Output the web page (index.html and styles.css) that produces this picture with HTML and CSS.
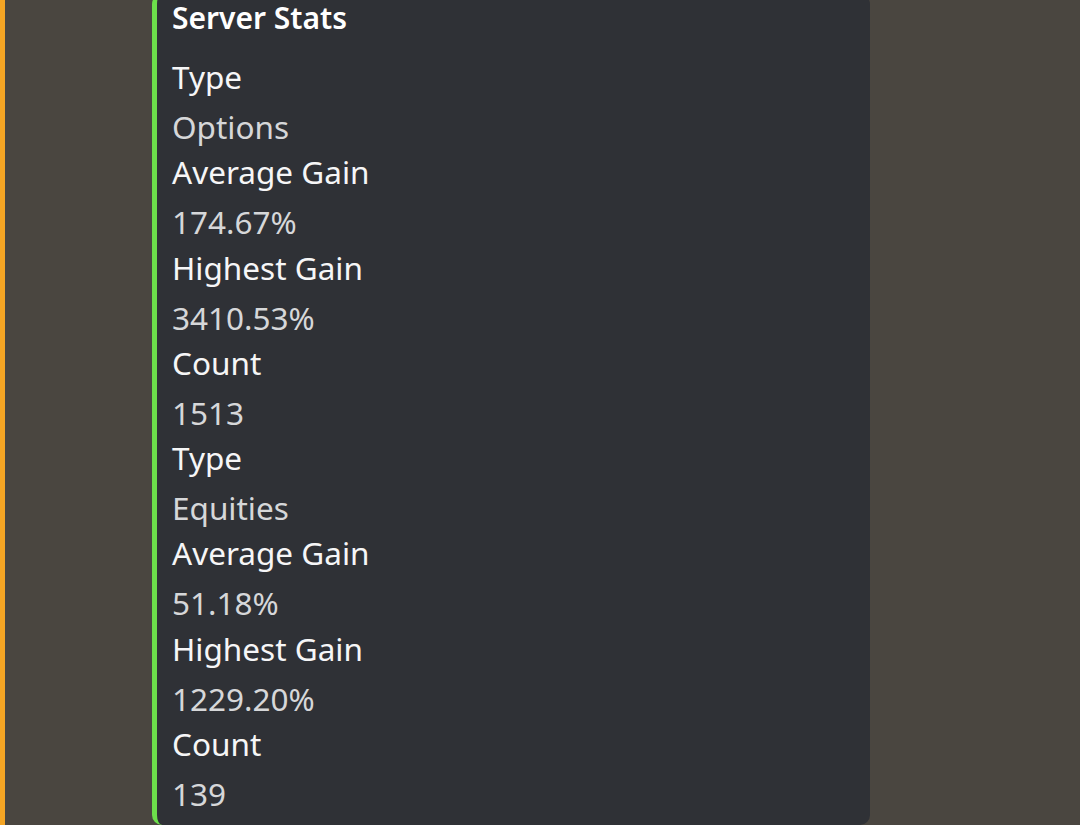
FILE: index.html
```html
<!DOCTYPE html>
<html>
<head>
<meta charset="utf-8">
<link rel="stylesheet" href="styles.css">
</head>
<body>
<div class="page">
  <div class="embed">
    <div class="embed-title">Server Stats</div>
    <div class="fields">
      <div class="field"><div class="field-name">Type</div><div class="field-value">Options</div></div>
      <div class="field"><div class="field-name">Average Gain</div><div class="field-value">174.67%</div></div>
      <div class="field"><div class="field-name">Highest Gain</div><div class="field-value">3410.53%</div></div>
      <div class="field"><div class="field-name">Count</div><div class="field-value">1513</div></div>
      <div class="field"><div class="field-name">Type</div><div class="field-value">Equities</div></div>
      <div class="field"><div class="field-name">Average Gain</div><div class="field-value">51.18%</div></div>
      <div class="field"><div class="field-name">Highest Gain</div><div class="field-value">1229.20%</div></div>
      <div class="field"><div class="field-name">Count</div><div class="field-value">139</div></div>
    </div>
  </div>
</div>
</body>
</html>
```
FILE: styles.css
```css
html, body {
  margin: 0;
  padding: 0;
  height: 100%;
  overflow: hidden;
}
body {
  background: #4a4640;
  font-family: "Noto Sans", "Open Sans", sans-serif;
}
.page {
  min-height: 100%;
  border-left: 5px solid #f5a524;
  box-sizing: border-box;
  padding-left: 147px;
}
.embed {
  box-sizing: border-box;
  width: 718px;
  margin-top: -6px;
  padding: 8px 16px 11px 15px;
  background: #2f3136;
  border-left: 5px solid #6cdf4b;
  border-radius: 10px;
}
.embed-title {
  color: #ffffff;
  font-weight: 600;
  font-size: 30px;
  line-height: 32px;
}
.fields {
  display: flex;
  flex-direction: column;
  gap: 5.3px;
  margin-top: 23px;
}
.field-name {
  color: #f6f6f7;
  font-weight: 400;
  font-size: 31.5px;
  line-height: 40px;
}
.field-value {
  color: #d6d7d9;
  font-weight: 400;
  font-size: 31.5px;
  line-height: 40px;
  margin-top: 10px;
}
```
